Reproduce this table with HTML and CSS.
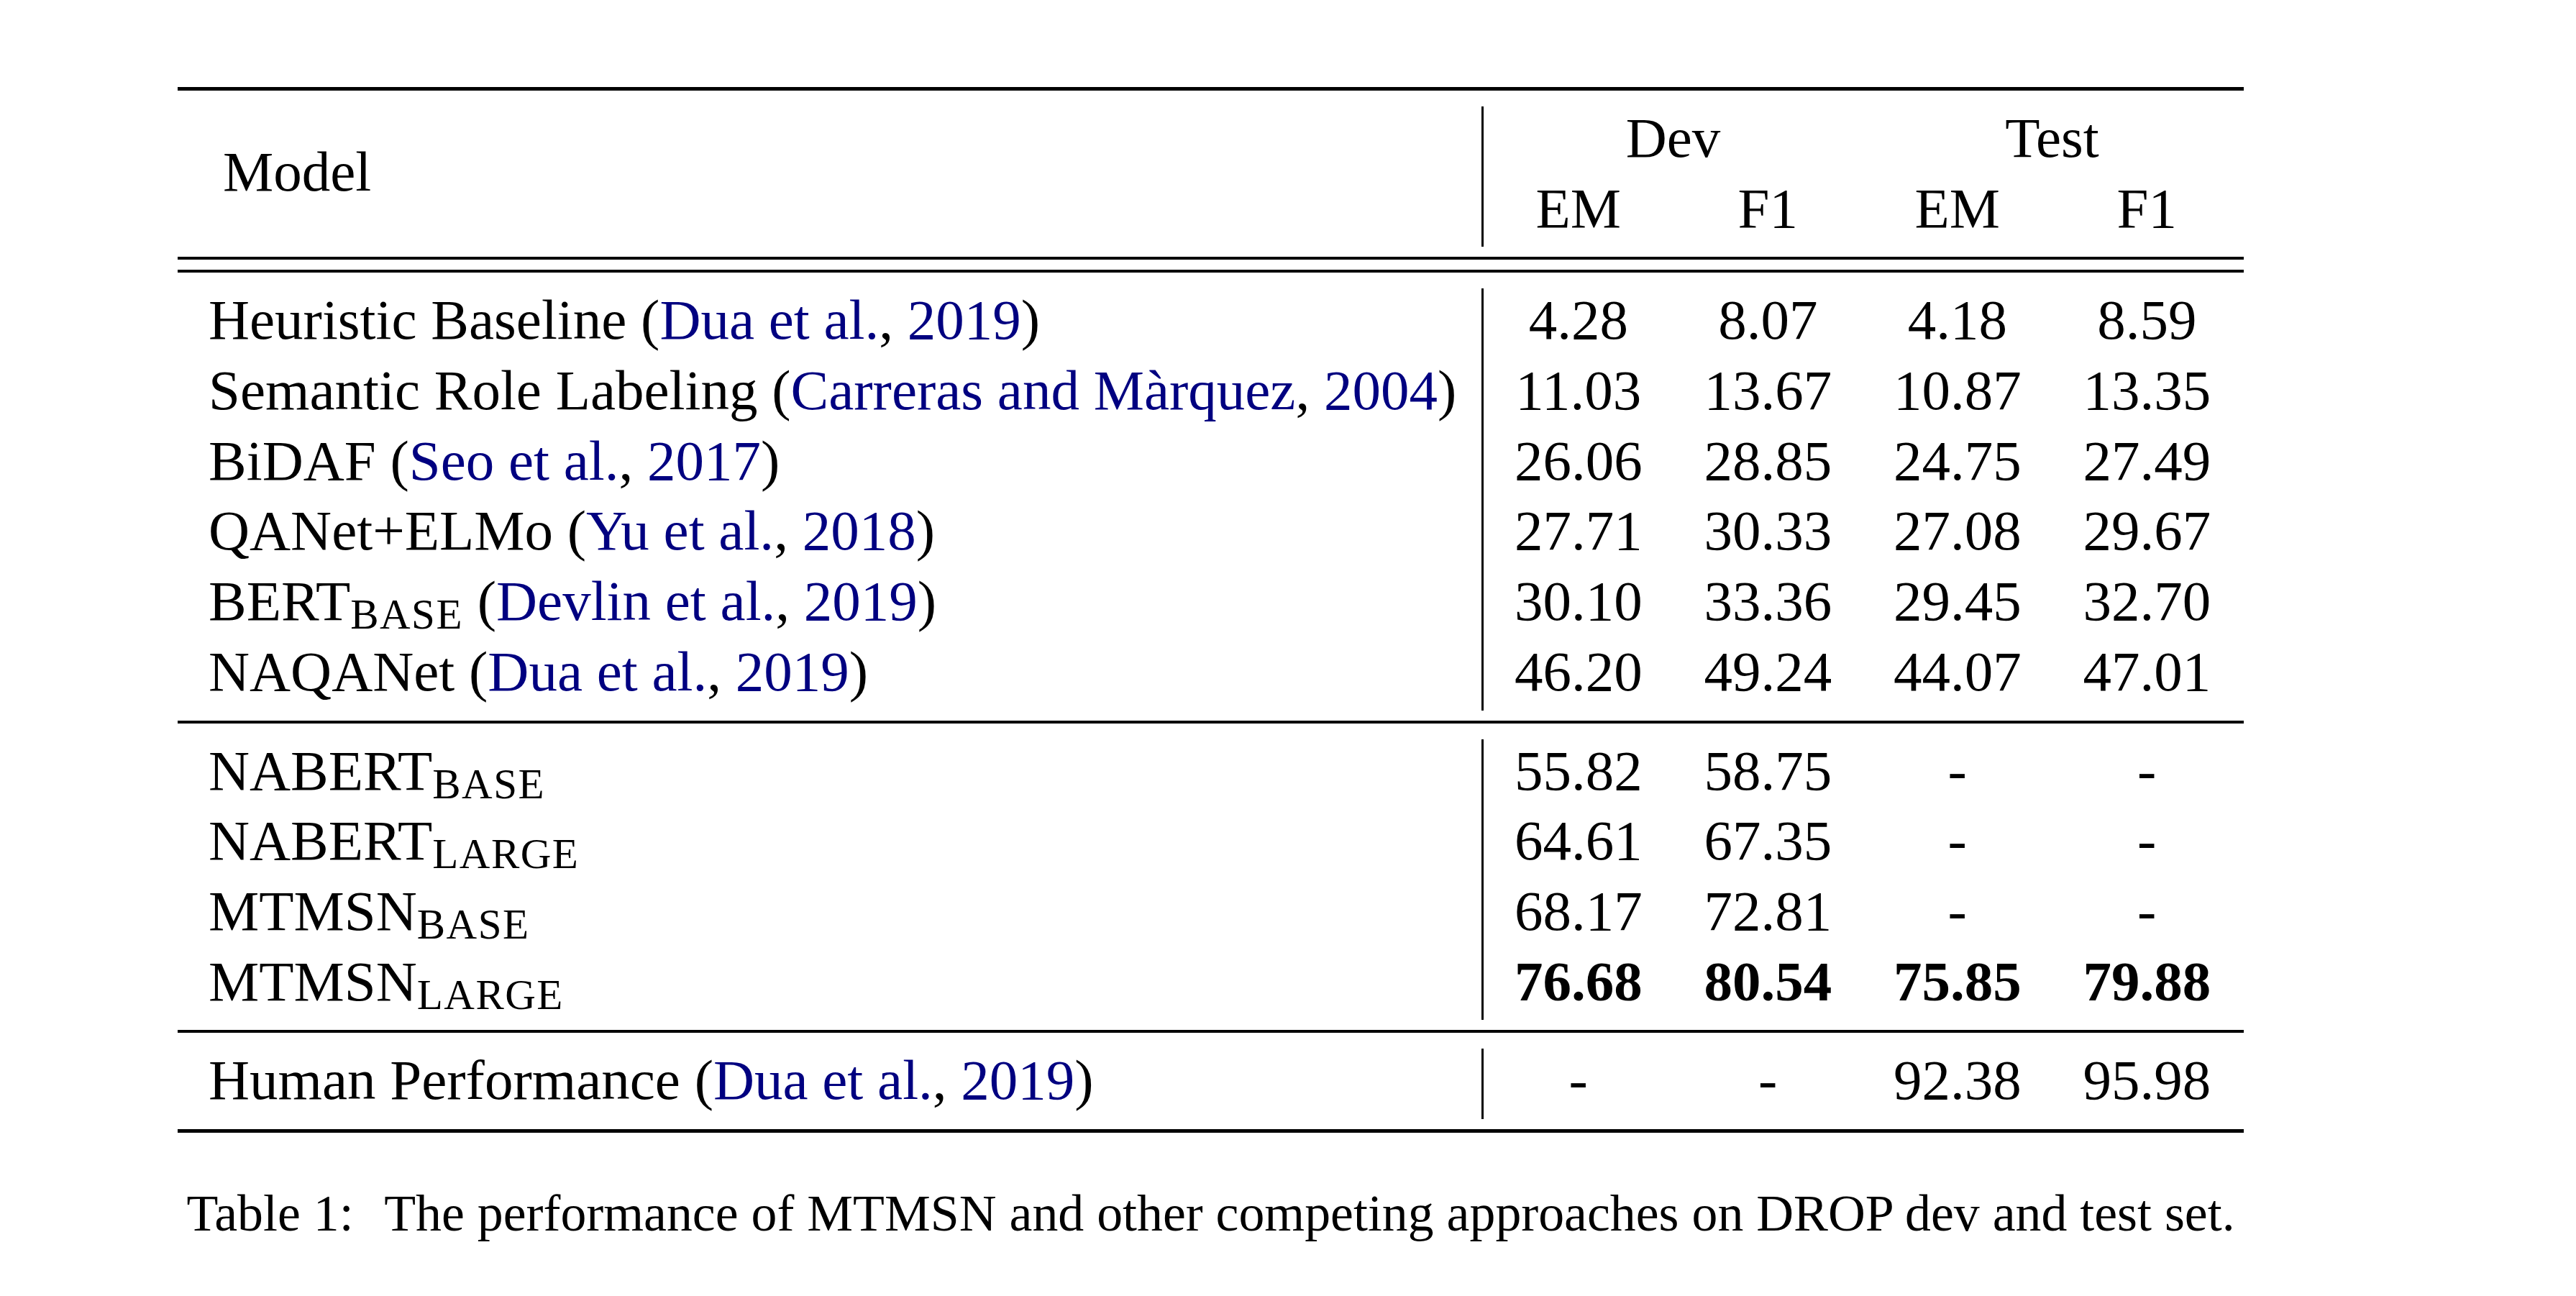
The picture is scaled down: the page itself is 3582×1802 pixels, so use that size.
FILE: index.html
```html
<!DOCTYPE html>
<html lang="en">
<head>
<meta charset="utf-8">
<title>Table 1</title>
<link rel="stylesheet" href="styles.css">
</head>
<body>
<div class="page">
  <div class="table">
    <div class="rule thick"></div>
    <div class="section">
      <div class="cell model head-model">Model</div>
      <div class="cell group">Dev</div>
      <div class="cell group">Test</div>
      <div class="cell num">EM</div>
      <div class="cell num">F1</div>
      <div class="cell num">EM</div>
      <div class="cell num">F1</div>
    </div>
    <div class="rule thin"></div>
    <div class="gap"></div>
    <div class="rule thin"></div>
    <div class="section">
      <div class="cell model">Heuristic Baseline (<span class="cite">Dua et al.</span>, <span class="cite">2019</span>)</div>
      <div class="cell num">4.28</div><div class="cell num">8.07</div><div class="cell num">4.18</div><div class="cell num">8.59</div>

      <div class="cell model">Semantic Role Labeling (<span class="cite">Carreras and Màrquez</span>, <span class="cite">2004</span>)</div>
      <div class="cell num">11.03</div><div class="cell num">13.67</div><div class="cell num">10.87</div><div class="cell num">13.35</div>

      <div class="cell model">BiDAF (<span class="cite">Seo et al.</span>, <span class="cite">2017</span>)</div>
      <div class="cell num">26.06</div><div class="cell num">28.85</div><div class="cell num">24.75</div><div class="cell num">27.49</div>

      <div class="cell model">QANet+ELMo (<span class="cite">Yu et al.</span>, <span class="cite">2018</span>)</div>
      <div class="cell num">27.71</div><div class="cell num">30.33</div><div class="cell num">27.08</div><div class="cell num">29.67</div>

      <div class="cell model">BERT<sub class="sub">BASE</sub> (<span class="cite">Devlin et al.</span>, <span class="cite">2019</span>)</div>
      <div class="cell num">30.10</div><div class="cell num">33.36</div><div class="cell num">29.45</div><div class="cell num">32.70</div>

      <div class="cell model">NAQANet (<span class="cite">Dua et al.</span>, <span class="cite">2019</span>)</div>
      <div class="cell num">46.20</div><div class="cell num">49.24</div><div class="cell num">44.07</div><div class="cell num">47.01</div>
    </div>
    <div class="rule thin"></div>
    <div class="section">
      <div class="cell model">NABERT<sub class="sub">BASE</sub></div>
      <div class="cell num">55.82</div><div class="cell num">58.75</div><div class="cell num">-</div><div class="cell num">-</div>

      <div class="cell model">NABERT<sub class="sub">LARGE</sub></div>
      <div class="cell num">64.61</div><div class="cell num">67.35</div><div class="cell num">-</div><div class="cell num">-</div>

      <div class="cell model">MTMSN<sub class="sub">BASE</sub></div>
      <div class="cell num">68.17</div><div class="cell num">72.81</div><div class="cell num">-</div><div class="cell num">-</div>

      <div class="cell model">MTMSN<sub class="sub">LARGE</sub></div>
      <div class="cell num bold">76.68</div><div class="cell num bold">80.54</div><div class="cell num bold">75.85</div><div class="cell num bold">79.88</div>
    </div>
    <div class="rule thin"></div>
    <div class="section">
      <div class="cell model">Human Performance (<span class="cite">Dua et al.</span>, <span class="cite">2019</span>)</div>
      <div class="cell num">-</div><div class="cell num">-</div><div class="cell num">92.38</div><div class="cell num">95.98</div>
    </div>
    <div class="rule thick"></div>
  </div>
  <p class="caption"><span class="label">Table 1:</span> The performance of MTMSN and other competing approaches on DROP dev and test set.</p>
</div>
</body>
</html>
```

FILE: styles.css
```css
html, body {
  margin: 0;
  padding: 0;
  background: #ffffff;
}

body {
  font-family: "Liberation Serif", "Times New Roman", serif;
  color: #000000;
}

.page {
  padding-top: 121px;
  padding-left: 247px;
}

.table {
  width: 2873px;
  font-size: 79px;
}

.rule {
  background: #000000;
}

.rule.thick {
  height: 5px;
}

.rule.thin {
  height: 4px;
}

.gap {
  height: 14px;
}

.section {
  display: grid;
  grid-template-columns: 1816px repeat(4, 263.5px);
  grid-auto-rows: 97.7px;
  padding: 22px 0 14px 0;
}

.cell {
  line-height: 87.5px;
  white-space: nowrap;
}

.model {
  padding-left: 43px;
  border-right: 3px solid #000000;
}

.head-model {
  grid-row: span 2;
  display: flex;
  align-items: center;
  padding-left: 63px;
  padding-bottom: 13px;
}

.group {
  grid-column: span 2;
  text-align: center;
}

.num {
  text-align: center;
}

.bold {
  font-weight: bold;
}

.cite {
  color: #000080;
}

.sub {
  font-size: 59px;
  letter-spacing: 1.5px;
  vertical-align: -12px;
  line-height: 0;
}

.caption {
  width: 2873px;
  margin: 72px 0 0 0;
  font-size: 71.8px;
  line-height: 80px;
  text-align: center;
  white-space: nowrap;
}

.label {
  margin-right: 26px;
}
```
